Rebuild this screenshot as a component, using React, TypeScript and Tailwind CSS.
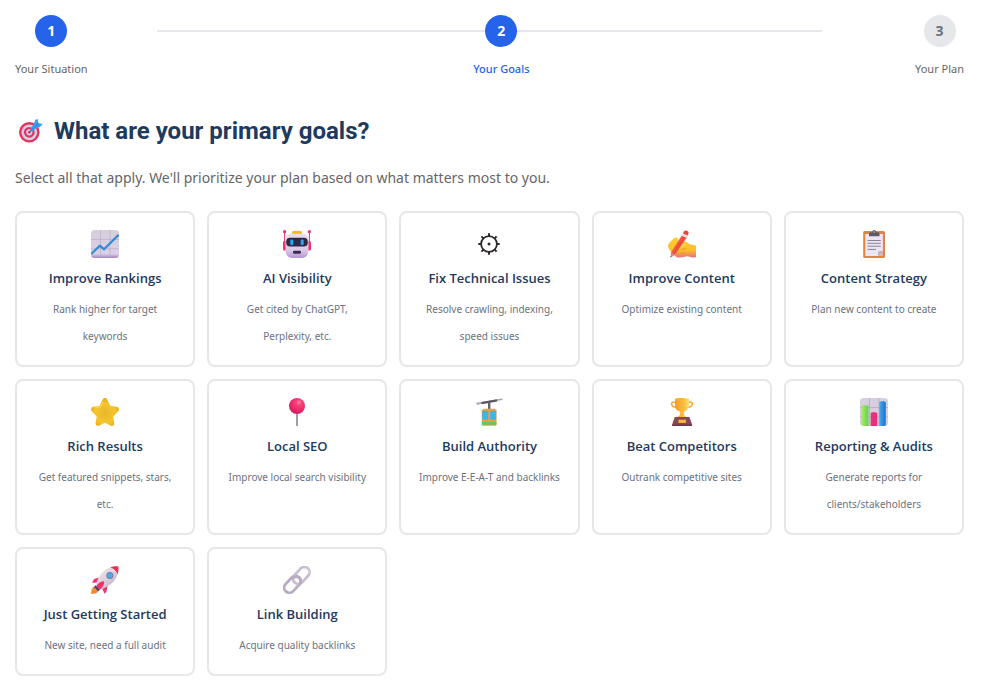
import React, { useState } from 'react'
import clsx from 'clsx'

const TargetIcon = () => (
  <svg className="h-6 w-6 shrink-0" viewBox="0 0 24 24" aria-hidden="true">
    <circle cx="10.3" cy="13.3" r="10.3" fill="#e0345f" />
    <circle cx="10.3" cy="13.3" r="7.9" fill="#d9cbe0" />
    <circle cx="10.3" cy="13.3" r="5.4" fill="#dc3565" />
    <circle cx="10.3" cy="13.3" r="3.1" fill="#dccbe2" />
    <circle cx="10.3" cy="13.3" r="1.2" fill="#c92f66" />
    <path d="M10.5 13 17 6.5" stroke="#2672b8" strokeWidth="1.2" strokeLinecap="round" />
    <path d="m12.2 9 3.2-5.4.9-2.9L18.6 0l.8 3.9L23.8 5l-3.1 3.2-3.3.8-4.6 3.6z" fill="#3a9ff0" />
    <path d="m13 10.8 6.3-6.6" stroke="#1f76c9" strokeWidth=".9" />
  </svg>
)

const ChartIcon = () => (
  <>
    <defs>
      <linearGradient id="chart-bg" x1="0" y1="0" x2="0" y2="1">
        <stop offset="0" stopColor="#d5cfdb" />
        <stop offset=".85" stopColor="#dccfe8" />
        <stop offset="1" stopColor="#a283c4" />
      </linearGradient>
    </defs>
    <rect width="28" height="28" rx="3.5" fill="url(#chart-bg)" />
    <path d="M9.5 0v27M19 0v27M0 9.5h28M0 18.7h28" stroke="#b9aec2" strokeWidth=".7" />
    <path d="m.3 24 8.5-8.3 4.2 3.5L27.7 4.7" fill="none" stroke="#2f8bd8" strokeWidth="2.2" />
  </>
)

const RobotIcon = () => (
  <>
    <defs>
      <linearGradient id="robot-head" x1="0" y1="0" x2="0" y2="1">
        <stop offset="0" stopColor="#e8dfeb" />
        <stop offset=".7" stopColor="#d9c6e8" />
        <stop offset="1" stopColor="#b593d4" />
      </linearGradient>
    </defs>
    <path d="M1.6 2v11M26.4 2v11" stroke="#d9386b" strokeWidth="1" />
    <circle cx="1.6" cy="1.7" r="1.6" fill="#f2306b" />
    <circle cx="26.4" cy="1.7" r="1.6" fill="#f2306b" />
    <rect x="0" y="11" width="4" height="9.5" rx="1.6" fill="#f2306b" />
    <rect x="24" y="11" width="4" height="9.5" rx="1.6" fill="#f2306b" />
    <rect x="9" y="1" width="10" height="5" rx="1.6" fill="#f5b727" />
    <path d="M8.5 3.7h11c4 0 6 2.5 6 6.8v9.2c0 5-2.5 8.3-7 8.3h-9c-4.5 0-7-3.3-7-8.3v-9.2c0-4.3 2-6.8 6-6.8z" fill="url(#robot-head)" />
    <rect x="3.2" y="7.8" width="21.6" height="8.6" rx="4" fill="#31264a" />
    <rect x="7.3" y="9.4" width="3" height="5.6" rx="1" fill="#20a8f2" />
    <rect x="17.7" y="9.4" width="3" height="5.6" rx="1" fill="#20a8f2" />
    <rect x="10" y="20.8" width="8" height="3" rx="1.3" fill="#382b4d" />
  </>
)

const GearIcon = () => (
  <g stroke="#2e2b29" fill="none">
    <circle cx="14" cy="14" r="7.9" strokeWidth="1.8" />
    <path
      d="M14 3.3v3M14 21.7v3M3.3 14h3M21.7 14h3M6.4 6.4l2.2 2.2M19.4 19.4l2.2 2.2M6.4 21.6l2.2-2.2M19.4 8.6l2.2-2.2"
      strokeWidth="2"
    />
    <circle cx="14" cy="14" r="1.5" fill="#2e2b29" stroke="none" />
  </g>
)

const WritingIcon = () => (
  <>
    <defs>
      <linearGradient id="hand" x1="0" y1="0" x2="0" y2="1">
        <stop offset="0" stopColor="#ffcf2e" />
        <stop offset=".65" stopColor="#fbbd2c" />
        <stop offset="1" stopColor="#e8707a" />
      </linearGradient>
    </defs>
    <path
      d="M.4 17.5c-.8-1.5-.4-3 .8-4.5l4.4-4.6c1.5-1.5 4-1.3 4.8.5l-.3 3.5 6.3-.6c2.5 0 3.8 1 5 2.5l6.6 1.2v11.7l-3.5.3-5-1.3-7.5 1.2c-2.5.5-4.5-.9-5.7-2.5-2.5-2-4.9-4.8-5.9-7.4z"
      fill="url(#hand)"
    />
    <path d="m10 14.5 6-1.2c2-.2 3 2.2 1 3.3l-6.5 2.7" fill="#ffd246" />
    <path d="m12.5 20 5.5-1.6M12 23.5l6-1" stroke="#e3952d" strokeWidth=".8" />
    <path d="M13.7 5.4 19 7.2 7.2 24.5l-4.3 2.6L3 22.4z" fill="#f4593b" />
    <path d="m15.9 6.2 1.5.5L5.5 25.3l-1.6.6z" fill="#e4483a" />
    <path d="m3 22.4 4.2 2.1-4.5 3z" fill="#d4868e" />
    <path d="m2.7 26 .9.6-1.4 1.2z" fill="#63405a" />
    <path d="M14.9 3.6c1-.7 4.7.9 4.9 2.2l-1.2 2-5.2-2.1z" fill="#ecd9df" />
    <path d="m15 3.4 1.2-2.3c1-1.5 4.6-.2 4.4 1.7l-.8 2.8z" fill="#ee4439" />
  </>
)

const ClipboardIcon = () => (
  <>
    <rect x="3.2" y=".9" width="21.8" height="27" rx="1.5" fill="#dc8746" />
    <path d="M5.3 4h17.6v17l-4.8 5H5.3z" fill="#ece6f2" />
    <path d="M22.9 20.7V26H18z" fill="#d6bbae" />
    <path d="M18 26c.3-2.5.2-4 .5-4.5.5-.6 2-.5 4.4-.8z" fill="#bcaecb" />
    <path d="M7.5 10.5h13.3M7.5 13.3h13.3M7.5 16.2h13.3M7.5 19.4H16" stroke="#8c7f98" strokeWidth="1" />
    <path d="M10.5 2.3h1.8c.1-3 3.7-3 3.8 0H18c1 0 1.5.6 1.5 1.5v2.5H9V3.8c0-.9.5-1.5 1.5-1.5z" fill="#635a68" />
    <circle cx="14.2" cy="2" r=".8" fill="#c9bfca" />
  </>
)

const StarIcon = () => (
  <>
    <defs>
      <radialGradient id="star" cx=".5" cy=".55" r=".55">
        <stop offset="0" stopColor="#e9b72b" />
        <stop offset=".65" stopColor="#f5c52d" />
        <stop offset="1" stopColor="#e6a91c" />
      </radialGradient>
    </defs>
    <path
      d="M11.6 1.6c1-2 3.6-2 4.6 0l2.8 5.7c.2.5.6.7 1 .8l5.7.7c2.3.4 3 2.9 1.5 4.4L22.8 18c-.4.4-.5.8-.4 1.3l.8 5.6c.4 2.4-1.9 3.8-3.9 2.7L14.6 25c-.5-.2-.9-.2-1.3 0l-4.8 2.6c-2.1 1.1-4.3-.5-3.9-2.8l1-5.5c.1-.5-.1-1-.4-1.3L.9 13.2C-.7 11.6.2 9.2 2.4 8.8l5.5-.8c.5-.1.8-.3 1-.8z"
      fill="url(#star)"
    />
    <path d="m11.9 4.6-2 4-5 1" fill="none" stroke="#ffe150" strokeWidth=".9" strokeLinecap="round" />
  </>
)

const PinIcon = () => (
  <>
    <defs>
      <radialGradient id="pin" cx=".62" cy=".28" r=".7">
        <stop offset="0" stopColor="#ff8fab" />
        <stop offset=".25" stopColor="#f7407a" />
        <stop offset=".7" stopColor="#ef2666" />
        <stop offset="1" stopColor="#c52669" />
      </radialGradient>
    </defs>
    <path d="M14 14v13.5" stroke="#8d83a0" strokeWidth="1.6" strokeLinecap="round" />
    <circle cx="14" cy="8" r="8" fill="url(#pin)" />
  </>
)

const TramIcon = () => (
  <>
    <path d="M2 5.7 27 1.2" stroke="#aaa0ae" strokeWidth="1.4" strokeLinecap="round" />
    <path d="M6.5 5.1 22 2.3" stroke="#5a5560" strokeWidth="2.2" />
    <circle cx="3.2" cy="5.4" r="1.5" fill="#bdb0c4" />
    <path d="M14.2 4v8" stroke="#67616c" strokeWidth="2.4" />
    <path d="M8.5 10.8h11.3l1.7 1.8v13.7c0 .8-.6 1.5-1.5 1.5H8.3c-.9 0-1.5-.7-1.5-1.5V12.6z" fill="#f1a033" />
    <rect x="7.2" y="12.7" width="6.1" height="9" rx=".6" fill="#3ab5ef" />
    <rect x="15.1" y="12.7" width="6.1" height="9" rx=".6" fill="#3ab5ef" />
    <path d="M6.8 23.8h14.7v2.9H6.8z" fill="#62c664" />
  </>
)

const TrophyIcon = () => (
  <>
    <defs>
      <linearGradient id="trophy">
        <stop offset="0" stopColor="#f79d2c" />
        <stop offset=".6" stopColor="#ffbd36" />
        <stop offset="1" stopColor="#ffe07a" />
      </linearGradient>
    </defs>
    <path
      d="M8 4.2H5.2c-2.6 0-2.4 4.8 2.8 5.2M20 4.2h2.8c2.6 0 2.4 4.8-2.8 5.2"
      fill="none"
      stroke="#f7a72f"
      strokeWidth="1.5"
    />
    <path d="M7 .7c3-.9 11-.9 14 0v7c0 3-2 5-4.3 5.6l-1 .9.5 3 2.8 2H9l2.8-2 .5-3-1-.9C8.8 12.7 7 10.7 7 7.7z" fill="url(#trophy)" />
    <path d="M6.8 19h14.6l2.7 7.5c.3.9-.2 1.5-1 1.5H5.2c-.9 0-1.3-.6-1-1.5z" fill="#87445c" />
    <path d="M4.3 26.5H24V28H4.3z" fill="#733850" />
    <rect x="10.5" y="21.7" width="7.4" height="3.2" fill="#f8b83e" />
  </>
)

const BarsIcon = () => (
  <>
    <defs>
      <linearGradient id="bar-green">
        <stop offset="0" stopColor="#a5ef58" />
        <stop offset="1" stopColor="#65cf57" />
      </linearGradient>
      <linearGradient id="bar-blue">
        <stop offset="0" stopColor="#49a8f2" />
        <stop offset="1" stopColor="#1974c9" />
      </linearGradient>
    </defs>
    <rect width="28" height="28" rx="3.5" fill="#d7cedf" />
    <path d="M9.5 0v28M19 0v28M0 9.5h28M0 18.7h28" stroke="#b3a8bc" strokeWidth=".7" />
    <path d="M1.7 8.2C1.7 7 8.5 7 8.5 8.2V28H3.2l-1.5-1z" fill="url(#bar-green)" />
    <path d="M10.7 15.5c0-1.6 6.5-1.6 6.5 0V28h-6.5z" fill="#e7327a" />
    <path d="M19.3 4.3c0-1.5 6.5-1.5 6.5 0v22.8l-1.3.9h-5.2z" fill="url(#bar-blue)" />
  </>
)

const RocketIcon = () => (
  <>
    <defs>
      <linearGradient id="rocket" x1="0" y1="0" x2="1" y2="1">
        <stop offset="0" stopColor="#f1e9ed" />
        <stop offset=".5" stopColor="#ddd0df" />
        <stop offset="1" stopColor="#b8a3c0" />
      </linearGradient>
    </defs>
    <path d="M3.5 20.5c-2.4.6-3.5 3.5-3.2 7.4 3.5 0 6.5-.9 7.3-3.2z" fill="#f28b32" />
    <path d="m8.2 11.4-4.4 1.4c-1 .5-1.6 1.5-2.6 3.9l6-.2zM16.5 19.7l-.8 4.8c-.3 1.5-.8 2.3-2 3.2l-2.5-5z" fill="#ef326b" />
    <path d="M5 18.5c2-7.8 7-14.7 14.5-17.2L26.7 8C24.4 15.5 18 20.7 9.8 23.2z" fill="url(#rocket)" />
    <path d="M19.3 1.3C22 .1 25 0 27.3.4c.5 2.5.1 5.3-.7 7.9-1.5-3.2-4-5.6-7.3-7z" fill="#ec304c" />
    <path d="m4.7 19.2 4.5 4.6-2 1.5L3 21z" fill="#46406d" />
    <path d="M5.3 19.9c1.5-2.4 4.3-4.2 6.7-4.6 1 0 1.4.7 1.2 1.6-.6 2.7-2.2 5.2-4.8 7z" fill="#f52e6c" />
    <circle cx="18.8" cy="9.4" r="3.5" fill="#74809a" />
    <circle cx="18.8" cy="9.4" r="2.5" fill="#48a9ed" />
  </>
)

const LinkIcon = () => (
  <g fill="none" strokeWidth="2.8">
    <rect x="-5.2" y="-9.7" width="10.4" height="19.4" rx="5.2" transform="translate(9.5 18.3) rotate(43)" stroke="#b9acc3" />
    <rect x="-5.2" y="-9.7" width="10.4" height="19.4" rx="5.2" transform="translate(18.3 9.5) rotate(43)" stroke="#c8bdcf" />
    <path d="M9 12.6c2.3-2.2 5.2-2.6 7.3-.6 2.2 2.1 1.7 4.8-.3 6.9" stroke="#b9acc3" />
    <path d="M20.5 2.7c2.5-1.8 6.4.4 5.7 4" stroke="#ded6e2" strokeWidth=".8" />
  </g>
)

const steps = ['Your Situation', 'Your Goals', 'Your Plan']
const currentStep = 1

const goals = [
  { title: 'Improve Rankings', text: 'Rank higher for target keywords', icon: ChartIcon },
  { title: 'AI Visibility', text: 'Get cited by ChatGPT, Perplexity, etc.', icon: RobotIcon },
  { title: 'Fix Technical Issues', text: 'Resolve crawling, indexing, speed issues', icon: GearIcon },
  { title: 'Improve Content', text: 'Optimize existing content', icon: WritingIcon },
  { title: 'Content Strategy', text: 'Plan new content to create', icon: ClipboardIcon },
  { title: 'Rich Results', text: 'Get featured snippets, stars, etc.', icon: StarIcon },
  { title: 'Local SEO', text: 'Improve local search visibility', icon: PinIcon },
  { title: 'Build Authority', text: 'Improve E-E-A-T and backlinks', icon: TramIcon },
  { title: 'Beat Competitors', text: 'Outrank competitive sites', icon: TrophyIcon },
  { title: 'Reporting & Audits', text: 'Generate reports for clients/stakeholders', icon: BarsIcon },
  { title: 'Just Getting Started', text: 'New site, need a full audit', icon: RocketIcon },
  { title: 'Link Building', text: 'Acquire quality backlinks', icon: LinkIcon },
]

const Stepper = () => (
  <div className="relative">
    <div className="absolute left-[15%] right-[15%] top-[15px] h-0.5 bg-[#e5e7eb]" />
    <ol className="relative flex justify-between">
      {steps.map((label, i) => (
        <li key={label} className="flex flex-col items-center" aria-current={i === currentStep ? 'step' : undefined}>
          <span
            className={clsx(
              'flex h-8 w-8 items-center justify-center rounded-full text-sm font-bold',
              i <= currentStep ? 'bg-[#2563eb] text-white' : 'bg-[#e5e7eb] text-[#6b7280]'
            )}
          >
            {i + 1}
          </span>
          <span
            className={clsx(
              'mt-2 text-[11px] leading-7',
              i === currentStep ? 'font-medium text-[#2563eb]' : 'text-[#666666]'
            )}
          >
            {label}
          </span>
        </li>
      ))}
    </ol>
  </div>
)

const App = () => {
  const [selected, setSelected] = useState<string[]>([])

  const toggle = (title: string) =>
    setSelected((prev) => (prev.includes(title) ? prev.filter((t) => t !== title) : [...prev, title]))

  return (
    <main className="bg-white pb-4 pl-[15px] pr-5 pt-[15px] font-['Noto_Sans','Open_Sans',sans-serif]">
      <Stepper />
      <h2 className="mt-7 flex items-center gap-[11px] pl-1 font-[Roboto,sans-serif] text-2xl font-bold leading-10 text-[#1e3a5f]">
        <TargetIcon />
        What are your primary goals?
      </h2>
      <p className="mt-3 text-sm leading-[30px] text-[#666666]">
        Select all that apply. We'll prioritize your plan based on what matters most to you.
      </p>
      <div className="mt-[18px] grid grid-cols-5 gap-3">
        {goals.map(({ title, text, icon: Icon }) => (
          <button
            key={title}
            type="button"
            aria-pressed={selected.includes(title)}
            onClick={() => toggle(title)}
            className={clsx(
              'flex cursor-pointer flex-col items-center rounded-lg border-2 bg-white px-[15px] pb-[15px] pt-[17px] text-center',
              selected.includes(title) ? 'border-[#2563eb]' : 'border-[#e5e7eb]'
            )}
          >
            <svg className="h-7 w-7" viewBox="0 0 28 28" aria-hidden="true">
              <Icon />
            </svg>
            <span className="mt-[7px] font-['Open_Sans',sans-serif] text-[13px] font-semibold leading-[27px] text-[#1e3a5f]">
              {title}
            </span>
            <span className="mt-1 text-[10px] leading-[27px] text-[#6b7280]">{text}</span>
          </button>
        ))}
      </div>
    </main>
  )
}

export default App
